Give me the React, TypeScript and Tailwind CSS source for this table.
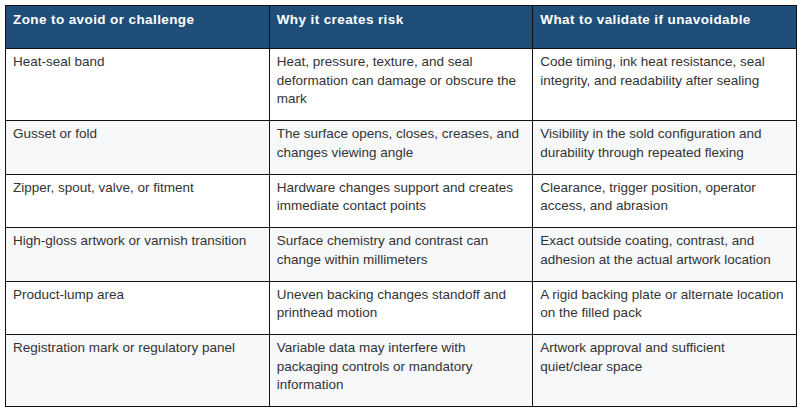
const rows: [string, string, string][] = [
  [
    "Heat-seal band",
    "Heat, pressure, texture, and seal deformation can damage or obscure the mark",
    "Code timing, ink heat resistance, seal integrity, and readability after sealing",
  ],
  [
    "Gusset or fold",
    "The surface opens, closes, creases, and changes viewing angle",
    "Visibility in the sold configuration and durability through repeated flexing",
  ],
  [
    "Zipper, spout, valve, or fitment",
    "Hardware changes support and creates immediate contact points",
    "Clearance, trigger position, operator access, and abrasion",
  ],
  [
    "High-gloss artwork or varnish transition",
    "Surface chemistry and contrast can change within millimeters",
    "Exact outside coating, contrast, and adhesion at the actual artwork location",
  ],
  [
    "Product-lump area",
    "Uneven backing changes standoff and printhead motion",
    "A rigid backing plate or alternate location on the filled pack",
  ],
  [
    "Registration mark or regulatory panel",
    "Variable data may interfere with packaging controls or mandatory information",
    "Artwork approval and sufficient quiet/clear space",
  ],
];

const headers = [
  "Zone to avoid or challenge",
  "Why it creates risk",
  "What to validate if unavoidable",
];

export default function App() {
  return (
    <div className="w-[802px] h-[412px] bg-white pl-[5px] pt-[5px] font-['Liberation_Sans',Arial,sans-serif]">
      <table className="w-[792px] table-fixed border-collapse border border-[#111]">
        <thead>
          <tr className="bg-[#1f4e79]">
            {headers.map((h) => (
              <th
                key={h}
                className="border border-[#111] pl-[7px] pr-[7px] pt-[5px] pb-[19px] text-left align-top text-[13.5px] leading-[18px] font-bold tracking-[0.4px] text-white"
              >
                {h}
              </th>
            ))}
          </tr>
        </thead>
        <tbody>
          {rows.map((r, i) => (
            <tr key={r[0]} className={i % 2 === 1 ? "bg-[#f7f8fa]" : "bg-white"}>
              {r.map((c, j) => (
                <td
                  key={j}
                  className="border border-[#111] pl-[7px] pr-[6px] pt-[4px] pb-[11.5px] align-top text-[13.5px] leading-[18.5px] text-[#333]"
                >
                  {c}
                </td>
              ))}
            </tr>
          ))}
        </tbody>
      </table>
    </div>
  );
}
